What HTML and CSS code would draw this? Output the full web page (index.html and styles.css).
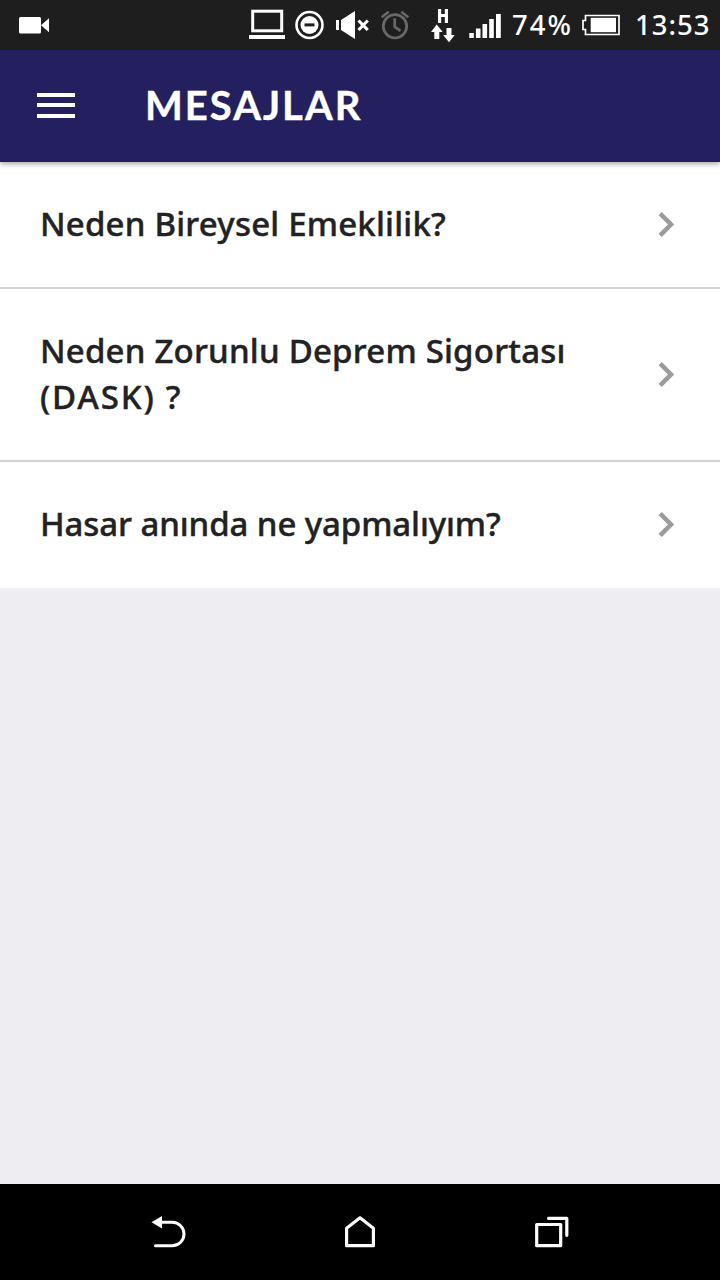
FILE: index.html
```html
<!DOCTYPE html>
<html lang="tr">
<head>
    <meta charset="utf-8">
    <title>Mesajlar</title>
    <link rel="stylesheet" href="styles.css">
</head>
<body>
    <div class="screen">
        <div class="status-bar">
            <svg class="camera" width="34" height="20" viewBox="0 0 34 20" fill="#fff">
                <rect x="1" y="2" width="22" height="16.500" rx="1.500"/>
                <path d="M23 10.300l8-7v14z"/>
            </svg>
            <!-- laptop, do not disturb, muted, alarm, data and signal -->
            <svg class="indicators" width="256" height="50" viewBox="248 0 256 50" fill="#fff">
                <rect x="252.700" y="11.200" width="29" height="19.600" fill="none" stroke="#fff" stroke-width="3"/>
                <rect x="249" y="35" width="36" height="4"/>
                <circle cx="309.500" cy="25" r="13" fill="none" stroke="#fff" stroke-width="2.600"/>
                <circle cx="309.500" cy="25" r="9"/>
                <path d="M304.500 24.900h10" stroke="#1e1e1e" stroke-width="3"/>
                <path d="M336 20h3v10h-3zM341 20l14-9v28l-14-9z"/>
                <path d="M358.500 20.500l9.300 9.500m0-9.500l-9.300 9.500" stroke="#fff" stroke-width="3.200"/>
                <g fill="none" stroke="#686868" stroke-width="2.700">
                    <circle cx="395" cy="26.300" r="11.700"/>
                    <path d="M381.700 17.300l7-5.500M408.300 17.300l-7-5.500M394.700 18.300v8.500l5.800 4" />
                </g>
                <path d="M438 9h3.200v5h3.600V9h3.200v14h-3.200v-6h-3.600v6H438z"/>
                <path d="M436.700 24.500l6 7.500h-3.400v7h-5v-7H431z"/>
                <path d="M446.500 28h5v7h3.300l-5.800 7.300-5.800-7.300h3.300z"/>
                <path d="M469.300 33h4.500v5h-4.500zM475.900 28.500h4.600V38h-4.600zM482.500 24h4.600v14h-4.600zM489.200 19h4.600v19h-4.600zM496 14h4.800v24H496z"/>
            </svg>
            <span class="percent">74%</span>
            <svg class="battery" width="40" height="24" viewBox="0 0 40 24">
                <path d="M4.500 2.500h33.500v19h-33.500v-5H2v-9h2.500z" fill="none" stroke="#fff" stroke-width="1.700"/>
                <rect x="9.700" y="4.800" width="25.300" height="14.400" fill="#fff"/>
            </svg>
            <span class="clock">13:53</span>
        </div>

        <header class="app-bar">
            <div class="menu">
                <span></span>
                <span></span>
                <span></span>
            </div>
            <h1>MESAJLAR</h1>
        </header>

        <ul class="messages">
            <li class="message">
                <span class="title">Neden Bireysel Emeklilik?</span>
                <svg class="arrow" width="18" height="26" viewBox="0 0 18 26"><path d="M2.200 2.700l10.800 10.800-10.800 10.800"/></svg>
            </li>
            <li class="message">
                <span class="title">Neden Zorunlu Deprem Sigortası<br><span class="wide">(DASK) ?</span></span>
                <svg class="arrow" width="18" height="26" viewBox="0 0 18 26"><path d="M2.200 2.700l10.800 10.800-10.800 10.800"/></svg>
            </li>
            <li class="message">
                <span class="title tight">Hasar anında ne yapmalıyım?</span>
                <svg class="arrow" width="18" height="26" viewBox="0 0 18 26"><path d="M2.200 2.700l10.800 10.800-10.800 10.800"/></svg>
            </li>
        </ul>

        <nav class="nav-bar">
            <svg width="36" height="36" viewBox="0 0 36 36">
                <path d="M11 8.300h11.300a11.500 11.500 0 0 1 0 23.400H5.500" fill="none" stroke="#fff" stroke-width="3" stroke-linecap="round"/>
                <path d="M1.500 8.300L12 2v12.600z" fill="#fff"/>
            </svg>
            <svg width="36" height="36" viewBox="0 0 36 36">
                <path d="M4.600 31.700V14.200L18 3.800l13.400 10.400v17.500z" fill="none" stroke="#fff" stroke-width="3.200" stroke-linejoin="round"/>
            </svg>
            <svg width="36" height="36" viewBox="0 0 36 36">
                <path d="M2.700 10.500h24v21.200h-24zM14.500 4.300h18.300v17" fill="none" stroke="#fff" stroke-width="3.200" stroke-linecap="round" stroke-linejoin="round"/>
            </svg>
        </nav>
    </div>
</body>
</html>
```

FILE: styles.css
```css
* {
    box-sizing: border-box;
}
body {
    margin: 0;
    font-family: "Noto Sans", sans-serif;
    background: #eeedf2;
}
.screen {
    display: flex;
    flex-direction: column;
    height: 1280px;
}
svg {
    display: block;
    flex: none;
}
.status-bar {
    display: flex;
    align-items: center;
    height: 50px;
    background: #1e1e1e;
    color: #fff;
    font-size: 27.5px;
    font-weight: 500;
    line-height: 36px;
    white-space: nowrap;
}
.camera {
    margin-left: 18px;
}
.indicators {
    margin-left: 196px;
}
.percent {
    width: 68px;
    margin-left: 8px;
    letter-spacing: 2px;
}
.battery {
    margin-left: 1px;
}
.clock {
    margin-left: 14px;
    letter-spacing: 1px;
}
.app-bar {
    display: flex;
    align-items: center;
    height: 112px;
    padding: 0 0 2px 37px;
    background: #241f5f;
    color: #fff;
    box-shadow: 0 2px 5px rgba(0, 0, 0, 0.35);
    z-index: 1;
}
.menu {
    display: flex;
    flex-direction: column;
    gap: 6.5px;
    width: 38px;
}
.menu span {
    height: 4px;
    background: #fff;
}
h1 {
    margin: 0 0 0 70px;
    font-family: Lato, sans-serif;
    font-size: 40px;
    font-weight: 700;
    line-height: 50px;
    letter-spacing: 2px;
    -webkit-text-stroke: 0.4px #fff;
}
.messages {
    flex: 1;
    margin: 0;
    padding: 0;
    list-style: none;
}
.message {
    display: flex;
    align-items: center;
    justify-content: space-between;
    padding: 39px 44px 40px 40px;
    background: #fff;
    border-bottom: 2px solid #d3d3d3;
}
.message:last-child {
    padding-bottom: 41px;
    border-bottom: none;
}
.title {
    color: #222;
    font-size: 33px;
    font-weight: 500;
    line-height: 46px;
    letter-spacing: 0.2px;
    white-space: nowrap;
    -webkit-text-stroke: 0.4px #222;
}
.wide {
    letter-spacing: 1.8px;
}
.tight {
    letter-spacing: -0.1px;
}
.arrow path {
    fill: none;
    stroke: #9b9b9b;
    stroke-width: 4.5;
}
.nav-bar {
    display: flex;
    align-items: center;
    justify-content: center;
    gap: 156px;
    height: 96px;
    background: #000;
}
```
